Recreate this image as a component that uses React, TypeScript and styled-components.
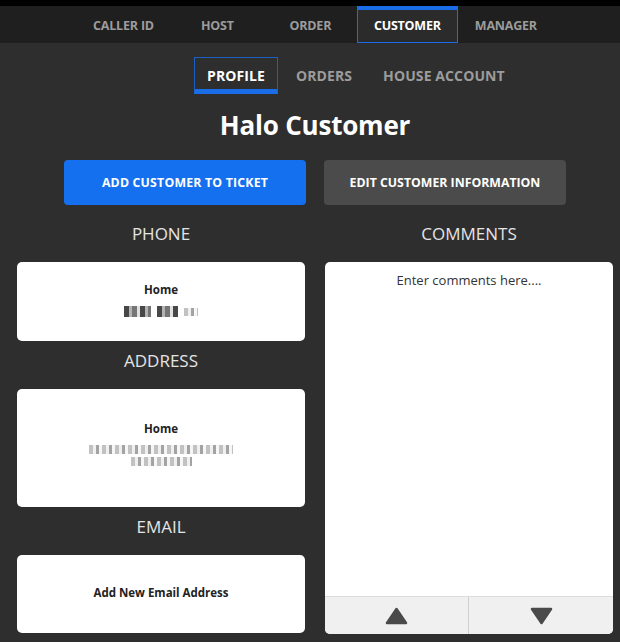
import React from "react";
import styled, { createGlobalStyle } from "styled-components";

const FONT = `"Open Sans", Lato, Arial, sans-serif`;

const GlobalStyle = createGlobalStyle`
  html, body { margin: 0; padding: 0; background: #2e2e2e; overflow: hidden; }
  body { font-family: ${FONT}; }
  * { box-sizing: border-box; }
`;

const Page = styled.div`
  width: 630px;
  min-height: 642px;
  background: #2e2e2e;
  display: flex;
  flex-direction: column;
`;

const TopStrip = styled.div`
  height: 6px;
  background: #000;
`;

const NavBar = styled.nav`
  height: 37px;
  background: #1f1f1f;
  display: flex;
  justify-content: center;
`;

const NavTab = styled.div<{ $active?: boolean }>`
  min-width: 93px;
  padding: 0 16px;
  display: flex;
  align-items: center;
  justify-content: center;
  font-size: 12.5px;
  font-weight: 700;
  letter-spacing: -0.2px;
  color: ${(p) => (p.$active ? "#ffffff" : "#9c9c9c")};
  background: ${(p) => (p.$active ? "#2b2b2b" : "transparent")};
  border: 1px solid ${(p) => (p.$active ? "#1a6de6" : "transparent")};
  border-top: 4px solid ${(p) => (p.$active ? "#1a6de6" : "transparent")};
  padding-bottom: 2px;
`;

const SubNav = styled.div`
  display: flex;
  margin: 14px 0 0 194px;
  height: 37px;
  gap: 5px;
`;

const SubTab = styled.div<{ $active?: boolean }>`
  padding: 0 12px;
  display: flex;
  align-items: center;
  font-size: 14px;
  font-weight: 700;
  letter-spacing: 0.1px;
  color: ${(p) => (p.$active ? "#ffffff" : "#9c9c9c")};
  border: 1px solid ${(p) => (p.$active ? "#1a5fc4" : "transparent")};
  border-bottom: 5px solid ${(p) => (p.$active ? "#1a6de6" : "transparent")};
  padding-top: 3px;
`;

const Content = styled.div`
  padding: 0 17px;
  display: flex;
  flex-direction: column;
`;

const Title = styled.h1`
  margin: 16px 0 0;
  text-align: center;
  font-size: 26px;
  line-height: 30px;
  font-weight: 700;
  letter-spacing: -0.2px;
  color: #ffffff;
`;

const ButtonRow = styled.div`
  display: flex;
  justify-content: center;
  gap: 18px;
  margin-top: 20px;
`;

const ActionButton = styled.button<{ $primary?: boolean }>`
  width: 242px;
  height: 45px;
  border: none;
  border-radius: 4px;
  background: ${(p) => (p.$primary ? "#1570ef" : "#4b4b4b")};
  color: #ffffff;
  font-family: ${FONT};
  font-size: 12.3px;
  font-weight: 700;
  letter-spacing: ${(p) => (p.$primary ? "0.2px" : "0")};
`;

const Columns = styled.div`
  display: grid;
  grid-template-columns: 288px 288px;
  gap: 20px;
  margin-top: 19px;
`;

const Column = styled.div`
  display: flex;
  flex-direction: column;
`;

const SectionLabel = styled.div<{ $first?: boolean }>`
  height: 20px;
  line-height: 20px;
  text-align: center;
  font-size: 17px;
  color: #e4e4e4;
  margin-top: ${(p) => (p.$first ? "0" : "10px")};
  margin-bottom: 18px;
`;

const Card = styled.div<{ $height: number; $lift?: number }>`
  height: ${(p) => p.$height}px;
  padding-bottom: ${(p) => p.$lift ?? 0}px;
  background: #ffffff;
  border-radius: 5px;
  display: flex;
  flex-direction: column;
  align-items: center;
  justify-content: center;
  gap: 9px;
`;

const CardTitle = styled.div`
  font-size: 11.5px;
  font-weight: 700;
  color: #222222;
  line-height: 14px;
`;

const RedactedLines = styled.div`
  display: flex;
  flex-direction: column;
  align-items: center;
  gap: 3px;
`;

const RedactedRow = styled.div`
  display: flex;
  gap: 6px;
  align-items: center;
`;

const Blot = styled.span<{ $w: number; $h: number; $dark?: boolean }>`
  display: inline-block;
  width: ${(p) => p.$w}px;
  height: ${(p) => p.$h}px;
  background: ${(p) =>
    p.$dark
      ? "repeating-linear-gradient(90deg, #333 0 5px, #aaa 5px 8px, #666 8px 13px, #ddd 13px 16px)"
      : "repeating-linear-gradient(90deg, #bbb 0 4px, #eee 4px 7px, #999 7px 10px, #f5f5f5 10px 13px)"};
  opacity: 0.9;
`;

const CommentsBox = styled.div`
  height: 372px;
  background: #ffffff;
  border-radius: 5px;
  display: flex;
  flex-direction: column;
  overflow: hidden;
`;

const Placeholder = styled.div`
  flex: 1;
  padding-top: 9px;
  text-align: center;
  font-size: 13px;
  color: #333333;
`;

const ArrowBar = styled.div`
  height: 38px;
  background: #f0f0f0;
  border-top: 1px solid #dcdcdc;
  display: grid;
  grid-template-columns: 1fr 1fr;
`;

const ArrowButton = styled.div<{ $divider?: boolean }>`
  display: flex;
  align-items: center;
  justify-content: center;
  border-right: ${(p) => (p.$divider ? "1px solid #cfcfcf" : "none")};
`;

const Triangle = ({ down }: { down?: boolean }) => (
  <svg width="23" height="18" viewBox="0 0 23 18">
    <path
      d={down ? "M2 2 H21 L11.5 16 Z" : "M11.5 2 L21 16 H2 Z"}
      fill="#4a4a4a"
      stroke="#4a4a4a"
      strokeWidth="2.5"
      strokeLinejoin="round"
    />
  </svg>
);

export default function App() {
  return (
    <Page>
      <GlobalStyle />
      <TopStrip />
      <NavBar>
        <NavTab>CALLER ID</NavTab>
        <NavTab>HOST</NavTab>
        <NavTab>ORDER</NavTab>
        <NavTab $active>CUSTOMER</NavTab>
        <NavTab>MANAGER</NavTab>
      </NavBar>
      <SubNav>
        <SubTab $active>PROFILE</SubTab>
        <SubTab>ORDERS</SubTab>
        <SubTab>HOUSE ACCOUNT</SubTab>
      </SubNav>
      <Content>
        <Title>Halo Customer</Title>
        <ButtonRow>
          <ActionButton $primary>ADD CUSTOMER TO TICKET</ActionButton>
          <ActionButton>EDIT CUSTOMER INFORMATION</ActionButton>
        </ButtonRow>
        <Columns>
          <Column>
            <SectionLabel $first>PHONE</SectionLabel>
            <Card $height={79} $lift={3}>
              <CardTitle>Home</CardTitle>
              <RedactedRow>
                <Blot $w={27} $h={11} $dark />
                <Blot $w={21} $h={11} $dark />
                <Blot $w={14} $h={8} />
              </RedactedRow>
            </Card>
            <SectionLabel>ADDRESS</SectionLabel>
            <Card $height={118} $lift={8}>
              <CardTitle>Home</CardTitle>
              <RedactedLines>
                <Blot $w={144} $h={9} />
                <Blot $w={61} $h={9} />
              </RedactedLines>
            </Card>
            <SectionLabel>EMAIL</SectionLabel>
            <Card $height={78} $lift={2}>
              <CardTitle>Add New Email Address</CardTitle>
            </Card>
          </Column>
          <Column>
            <SectionLabel $first>COMMENTS</SectionLabel>
            <CommentsBox>
              <Placeholder>Enter comments here....</Placeholder>
              <ArrowBar>
                <ArrowButton $divider>
                  <Triangle />
                </ArrowButton>
                <ArrowButton>
                  <Triangle down />
                </ArrowButton>
              </ArrowBar>
            </CommentsBox>
          </Column>
        </Columns>
      </Content>
    </Page>
  );
}
